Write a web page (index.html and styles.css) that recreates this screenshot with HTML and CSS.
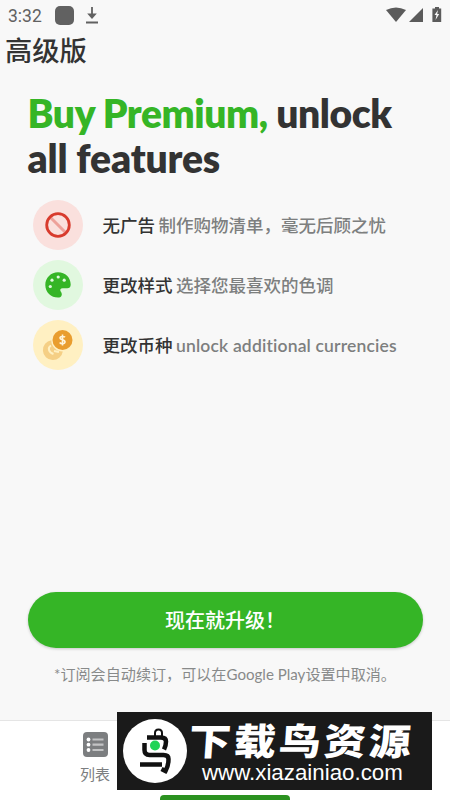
FILE: index.html
```html
<!DOCTYPE html>
<html lang="zh-CN">
<head>
<meta charset="utf-8">
<title>高级版</title>
<link rel="stylesheet" href="styles.css">
</head>
<body>
<div class="screen">
  <header class="status">
    <span class="time">3:32</span>
    <span class="app-dot"></span>
    <svg class="download" width="14" height="18" viewBox="0 0 14 18"><path d="M7 1v9M1 16.500h12" stroke="#616161" stroke-width="1.800" fill="none"/><path d="M2.200 7.500h9.600L7 13z" fill="#616161"/></svg>
    <svg class="signals" width="58" height="18" viewBox="0 0 58 18" fill="#5b5b5b"><path d="M0 4Q10-1 20 4L10 16z"/><path d="M37 2v14H23z"/><path d="M49 1h4v1.500h2.200V16h-8.800V2.500H49z"/><path d="M52 4l-3.500 5h2l-1 5 3.700-6h-2z" fill="#f8f8f8"/></svg>
  </header>
  <h1 class="title">高级版</h1>
  <main class="content">
    <h2 class="headline"><span class="accent">Buy Premium,</span> unlock<br><span class="second">all features</span></h2>
    <ul class="features">
      <li class="feature">
        <span class="badge red"><svg width="50" height="50" viewBox="0 0 50 50"><path d="M17 17l16 16" stroke="#eda19a" stroke-width="3"/><circle cx="25" cy="25" r="11.300" fill="none" stroke="#d83b2d" stroke-width="2.800"/></svg></span>
        <p><b>无广告</b> 制作购物清单，毫无后顾之忧</p>
      </li>
      <li class="feature">
        <span class="badge green"><svg width="50" height="50" viewBox="0 0 50 50"><path d="M25 12.300c7.400 0 12.700 5.300 12.700 12.200 0 3-1.400 3.700-3.500 3.700h-4.500c-2.300 0-3 1.600-2 3.400 1 1.500 1.600 2.800.7 4.400-.7 1.300-1.700 1.600-3.400 1.600-7 0-12.700-5.400-12.700-12.600S18 12.300 25 12.300z" fill="#35b526"/><g fill="#e1f8df"><circle cx="17.300" cy="26.500" r="1.600"/><circle cx="19" cy="20.200" r="1.600"/><circle cx="25.200" cy="17" r="1.600"/><circle cx="31.200" cy="20.200" r="1.600"/></g></svg></span>
        <p><b>更改样式</b> 选择您最喜欢的色调</p>
      </li>
      <li class="feature">
        <span class="badge yellow"><svg width="50" height="50" viewBox="0 0 50 50"><path d="M18.300 20.200a10 10 0 1 0 11.500 11.300 11.300 11.300 0 0 1-11.500-11.300z" fill="#f5cf85"/><path d="M18 25.500c-4 2.500-2 7 2.500 8.500M21 31l5 1" stroke="#fff0c2" stroke-width="2" fill="none"/><circle cx="29.500" cy="20" r="10" fill="#e99d2e"/><path d="M32 17.300c-.7-1-4.800-1.500-5 .7-.1 2.300 5.200 1.300 5 4-.2 2.300-4.300 2-5.300.5M29.500 14.500v11" stroke="#fff5dc" stroke-width="1.600" fill="none"/></svg></span>
        <p class="latin"><b>更改币种</b> <span>unlock additional currencies</span></p>
      </li>
    </ul>
    <div class="purchase">
      <button class="upgrade">现在就升级！</button>
      <p class="note">*订阅会自动续订，可以在Google Play设置中取消。</p>
    </div>
  </main>
  <nav class="tabs">
    <div class="tab">
      <svg width="25" height="25" viewBox="0 0 25 25"><rect width="25" height="25" rx="4" fill="#7c7e80"/><g fill="#fff"><circle cx="5.500" cy="7.500" r="1.900"/><circle cx="5.500" cy="12.700" r="1.900"/><circle cx="5.500" cy="18" r="1.900"/></g><path d="M9.500 7.500h11M9.500 12.700h11M9.500 18h11" stroke="#c3c4c5" stroke-width="2.200"/></svg>
      <span>列表</span>
    </div>
  </nav>
  <div class="handle"></div>
  <aside class="banner">
    <svg class="bird" width="64" height="64" viewBox="0 0 64 64"><circle cx="32" cy="32" r="32" fill="#fff"/><g fill="none" stroke="#111" stroke-width="4.500"><path d="M32 17v-3q0-3.500 3.500-3.500T39 14v3" stroke-width="2"/><path d="M24 18.500h14q5 0 5 4 0 4-2 8"/><path d="M21.500 24v7q0 5 5 5h14q5 0 5 4 0 7-3 12l-4-2M17 45.500h22"/></g><circle cx="32" cy="26.500" r="5" fill="#20d457"/></svg>
    <div class="brand"><strong>下载鸟资源</strong><span>www.xiazainiao.com</span></div>
  </aside>
</div>
</body>
</html>
```
FILE: styles.css
```css
* { box-sizing: border-box; }
body { margin: 0; font-family: Lato, "Noto Sans CJK SC", sans-serif; color: #333; font-variant-ligatures: none; }
h1, h2, p, ul { margin: 0; padding: 0; }
.screen { position: relative; width: 450px; height: 800px; overflow: hidden; background: #f8f8f8; display: flex; flex-direction: column; }
.status { height: 30px; flex: none; display: flex; align-items: center; padding: 0 7px; color: #616161; }
.time { width: 48px; font: 17.500px/30px Roboto, sans-serif; padding: 1px 0 0 1px; }
.app-dot { width: 19px; height: 19px; border-radius: 5px; background: #616161; }
.download { margin-left: 11px; }
.signals { margin-left: auto; margin-right: -1px; }
.title { height: 40px; padding-left: 5px; font: 500 27.300px/38px "Noto Sans CJK SC", sans-serif; }
.content { flex: 1; display: flex; flex-direction: column; padding: 21px 27.500px 0; }
.headline { font-size: 39px; line-height: 45px; font-weight: 800; letter-spacing: -.45px; white-space: nowrap; }
.second { letter-spacing: -.15px; }
.accent { color: #35b526; }
.features { list-style: none; margin-top: 19px; display: grid; gap: 10px; padding-left: 5px; }
.feature { height: 50px; display: flex; align-items: center; gap: 20px; color: #7d7f7f; font-size: 17.500px; font-weight: 500; white-space: nowrap; }
.feature p { margin-top: -2px; }
.feature b { color: #333; font-weight: 500; margin-right: -1px; }
.latin span { font-weight: 600; letter-spacing: .17px; }
.badge { width: 50px; height: 50px; border-radius: 50%; }
.badge svg { display: block; }
.red { background: #fae0dd; }
.green { background: #e1f8df; }
.yellow { background: #fff0c2; }
.purchase { margin-top: auto; height: 128px; text-align: center; }
.upgrade { display: block; width: 395px; height: 56px; border: 0; border-radius: 28px; background: #35b526; color: #fff; font: 500 20px/56px Lato, "Noto Sans CJK SC", sans-serif; padding: 0; box-shadow: 0 1px 3px rgba(0,0,0,.2); }
.note { margin-top: 14px; font-size: 15.100px; line-height: 24px; color: #888a8a; white-space: nowrap; }
.tabs { height: 80px; flex: none; border-top: 1px solid #e5e5e5; background: #fff; padding: 11px 0 0 65px; }
.tab { width: 60px; display: flex; flex-direction: column; align-items: center; gap: 6px; font-size: 15px; line-height: 22px; color: #7c7e80; }
.handle { position: absolute; left: 160px; top: 795px; width: 130px; height: 5px; border-radius: 4px 4px 0 0; background: #2b9220; }
.banner { position: absolute; left: 117px; top: 712px; width: 315px; height: 78px; background: #1a1a1a; color: #fff; display: flex; align-items: center; padding-left: 6px; gap: 2px; }
.brand { display: flex; flex-direction: column; white-space: nowrap; }
.brand strong { font: 900 42px/42px "Noto Sans CJK SC", sans-serif; letter-spacing: 3px; transform: skewX(-4deg) scaleY(.88); }
.brand span { font: 22.300px/24px "Liberation Sans", sans-serif; padding-left: 13px; margin-top: 1px; }
```
